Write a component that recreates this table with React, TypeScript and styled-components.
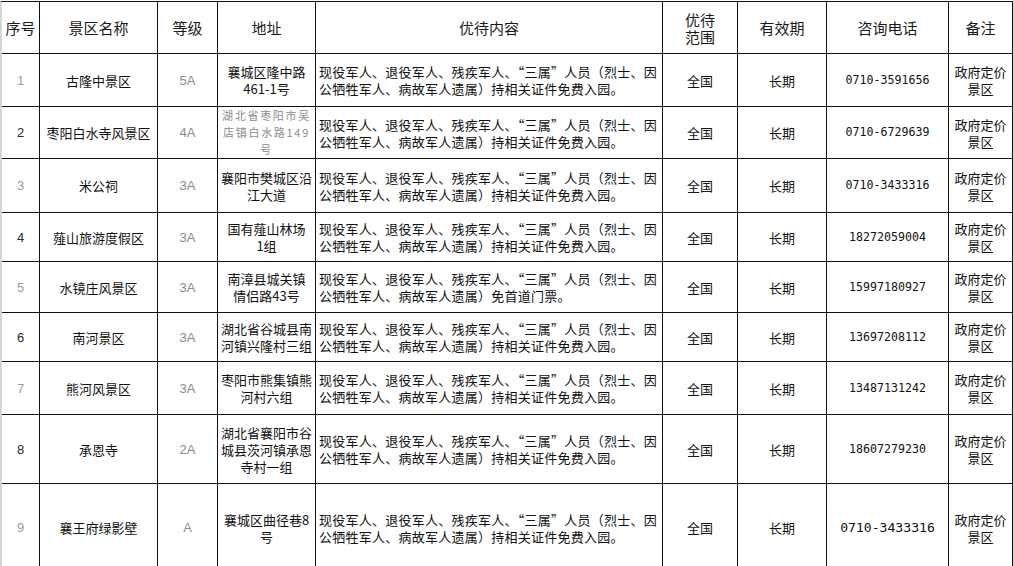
import * as React from 'react';
import styled, { createGlobalStyle } from 'styled-components';

type Spot = {
    no: number,
    name: string,
    grade: string,
    addr: string[],
    faded?: boolean,
    perk: string[],
    phone: string,
    bigPhone?: boolean
};

const FREE = ['现役军人、退役军人、残疾军人、“三属”人员（烈士、因', '公牺牲军人、病故军人遗属）持相关证件免费入园。'];
const GATE = ['现役军人、退役军人、残疾军人、“三属”人员（烈士、因', '公牺牲军人、病故军人遗属）免首道门票。'];

const spots: Spot[] = [
    { no: 1, name: '古隆中景区', grade: '5A', addr: ['襄城区隆中路', '461-1号'], perk: FREE, phone: '0710-3591656' },
    { no: 2, name: '枣阳白水寺风景区', grade: '4A', addr: ['湖北省枣阳市吴', '店镇白水路149', '号'], faded: true, perk: FREE, phone: '0710-6729639' },
    { no: 3, name: '米公祠', grade: '3A', addr: ['襄阳市樊城区沿', '江大道'], perk: FREE, phone: '0710-3433316' },
    { no: 4, name: '薤山旅游度假区', grade: '3A', addr: ['国有薤山林场', '1组'], perk: FREE, phone: '18272059004' },
    { no: 5, name: '水镜庄风景区', grade: '3A', addr: ['南漳县城关镇', '情侣路43号'], perk: GATE, phone: '15997180927' },
    { no: 6, name: '南河景区', grade: '3A', addr: ['湖北省谷城县南', '河镇兴隆村三组'], perk: FREE, phone: '13697208112' },
    { no: 7, name: '熊河风景区', grade: '3A', addr: ['枣阳市熊集镇熊', '河村六组'], perk: FREE, phone: '13487131242' },
    { no: 8, name: '承恩寺', grade: '2A', addr: ['湖北省襄阳市谷', '城县茨河镇承恩', '寺村一组'], perk: FREE, phone: '18607279230' },
    { no: 9, name: '襄王府绿影壁', grade: 'A', addr: ['襄城区曲径巷8', '号'], perk: FREE, phone: '0710-3433316', bigPhone: true }
];

const COLS = [38, 118, 60, 98, 347, 75, 89, 122, 64];
const ROWS = [52, 53, 52, 54, 49, 51, 49, 53, 69, 88];

const GlobalStyle = createGlobalStyle`
    html, body {
        margin: 0;
        padding: 0;
        background: #fff;
        overflow: hidden;
    }
    body {
        font-family: "Noto Sans CJK SC", sans-serif;
        color: #111;
    }
`;

const Sheet = styled.div`
    display: grid;
    grid-template-columns: ${COLS.map(c => `${c}px`).join(' ')};
    grid-template-rows: ${ROWS.map(r => `${r}px`).join(' ')};
    width: max-content;
    margin-top: 1px;
    border-top: 1px solid #111;
    border-left: 2px solid #cddacd;
`;

const Cell = styled.div<{ $left?: boolean }>`
    box-sizing: border-box;
    display: flex;
    flex-direction: column;
    justify-content: center;
    align-items: ${p => (p.$left ? 'flex-start' : 'center')};
    text-align: center;
    padding: 0 3px;
    border-right: 1px solid #111;
    border-bottom: 1px solid #111;
    font-size: 13px;
    line-height: 17px;
    white-space: nowrap;
    overflow: hidden;
`;

const HeadCell = styled(Cell)`
    font-size: 15px;
    line-height: 17px;
    color: #1a1a1a;
`;

const NumCell = styled(Cell)<{ $muted?: boolean }>`
    font-family: "Liberation Sans", Arial, sans-serif;
    color: ${p => (p.$muted ? '#9a9a9a' : '#2a2a2a')};
`;

const GradeCell = styled(Cell)`
    font-family: "Liberation Sans", Arial, sans-serif;
    color: #8a8a8a;
`;

const AddrCell = styled(Cell)<{ $faded?: boolean }>`
    color: ${p => (p.$faded ? '#8c8c8c' : '#111')};
    font-size: ${p => (p.$faded ? '11px' : '13px')};
    letter-spacing: ${p => (p.$faded ? '1.7px' : '0')};
`;

const PerkCell = styled(Cell)`
    letter-spacing: 0.25px;
`;

const PhoneCell = styled(Cell)<{ $big?: boolean }>`
    font-family: "DejaVu Sans Mono", "Liberation Mono", monospace;
    font-size: ${p => (p.$big ? '13.1px' : '11.6px')};
    color: #111;
`;

const Line = styled.span`
    display: block;
`;

const lines = (list: string[]) => list.map((l, i) => <Line key={i}>{l}</Line>);

const App: React.FC = () => {
    return (
        <>
            <GlobalStyle/>
            <Sheet lang="zh-CN">
                <HeadCell>序号</HeadCell>
                <HeadCell>景区名称</HeadCell>
                <HeadCell>等级</HeadCell>
                <HeadCell>地址</HeadCell>
                <HeadCell>优待内容</HeadCell>
                <HeadCell>{lines(['优待', '范围'])}</HeadCell>
                <HeadCell>有效期</HeadCell>
                <HeadCell>咨询电话</HeadCell>
                <HeadCell>备注</HeadCell>
                {spots.map(s => (
                    <React.Fragment key={s.no}>
                        <NumCell $muted={s.no % 2 === 1}>{s.no}</NumCell>
                        <Cell>{s.name}</Cell>
                        <GradeCell>{s.grade}</GradeCell>
                        <AddrCell $faded={s.faded}>{lines(s.addr)}</AddrCell>
                        <PerkCell $left>{lines(s.perk)}</PerkCell>
                        <Cell>全国</Cell>
                        <Cell>长期</Cell>
                        <PhoneCell $big={s.bigPhone}>{s.phone}</PhoneCell>
                        <Cell>{lines(['政府定价', '景区'])}</Cell>
                    </React.Fragment>
                ))}
            </Sheet>
        </>
    );
};

export default App;
